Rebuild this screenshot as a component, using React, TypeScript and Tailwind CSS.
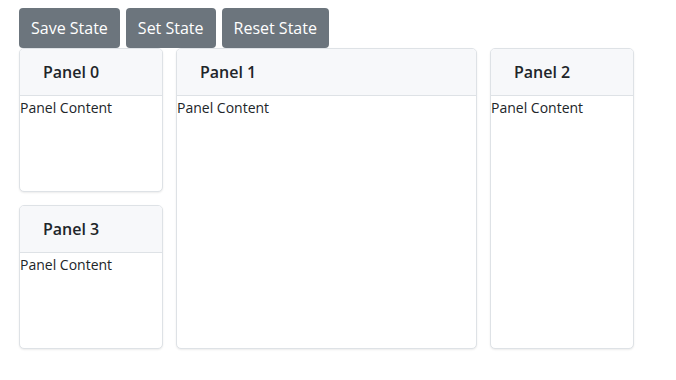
import React from "react";

const font = { fontFamily: '"Open Sans", "Noto Sans", sans-serif' };

function Panel({ title, className }: { title: string; className: string }) {
  return (
    <div className={`flex flex-col rounded-[5px] border border-[#dee2e6] bg-white shadow-[0_1px_2px_rgba(0,0,0,0.08)] overflow-hidden ${className}`}>
      <div className="h-[47px] shrink-0 flex items-center pl-[23px] bg-[#f7f8fa] border-b border-[#dee2e6]">
        <h3 className="text-[16px] font-semibold text-[#212529]">{title}</h3>
      </div>
      <div className="text-[14px] text-[#212529] leading-[22px] pt-[1px]">Panel Content</div>
    </div>
  );
}

export default function App() {
  return (
    <div className="min-h-screen bg-white pl-[19px] pt-[8px]" style={font}>
      <div className="flex gap-[6px]">
        <button className="h-[40px] px-[12px] rounded-[4px] bg-[#6c757d] text-white text-[16px]">Save State</button>
        <button className="h-[40px] px-[12px] rounded-[4px] bg-[#6c757d] text-white text-[16px]">Set State</button>
        <button className="h-[40px] px-[12px] rounded-[4px] bg-[#6c757d] text-white text-[16px]">Reset State</button>
      </div>
      <div className="grid grid-cols-[144px_144px_144px_144px] grid-rows-[144px_144px] gap-[13px] w-fit">
        <Panel title="Panel 0" className="col-start-1 row-start-1" />
        <Panel title="Panel 1" className="col-start-2 col-span-2 row-start-1 row-span-2" />
        <Panel title="Panel 2" className="col-start-4 row-start-1 row-span-2" />
        <Panel title="Panel 3" className="col-start-1 row-start-2" />
      </div>
    </div>
  );
}
